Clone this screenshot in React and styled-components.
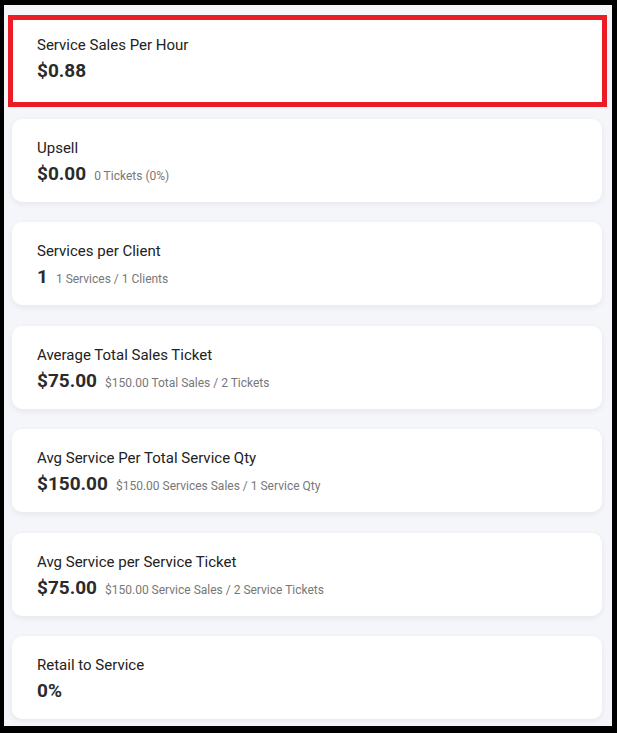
import styled, { createGlobalStyle } from "styled-components";

const GlobalStyle = createGlobalStyle`
  html, body {
    margin: 0;
    padding: 0;
    background: #000;
  }
  body {
    font-family: Roboto, "Liberation Sans", Arial, sans-serif;
  }
`;

const Frame = styled.div`
  box-sizing: border-box;
  width: 617px;
  height: 733px;
  border-style: solid;
  border-color: #000;
  border-width: 5px 5px 7px 4px;
  background: #f5f6fa;
  overflow: hidden;
`;

const List = styled.div`
  display: flex;
  flex-direction: column;
  gap: 20.4px;
  padding: 10px 10px 0 8px;
`;

const Highlight = styled.div`
  border: 5px solid #ec1c24;
  margin: 0 -5px -8.4px -4px;
  background: #fff;
`;

const Card = styled.div`
  box-sizing: border-box;
  height: ${(p) => (p.$flat ? "82px" : "83px")};
  background: #fff;
  border-radius: ${(p) => (p.$flat ? "0 0 10px 0" : "10px")};
  box-shadow: ${(p) => (p.$flat ? "none" : "0 2px 6px rgba(20, 30, 60, 0.07)")};
  padding: ${(p) => (p.$flat ? "16px 24px 0 24px" : "20px 25px 0 25px")};
`;

const Title = styled.div`
  font-size: 15px;
  font-weight: 400;
  color: #222;
  line-height: 18px;
`;

const ValueRow = styled.div`
  display: flex;
  align-items: baseline;
  gap: 8px;
  margin-top: 6px;
`;

const Value = styled.span`
  font-size: 19px;
  font-weight: 700;
  color: #2b2b2b;
  line-height: 22px;
`;

const Note = styled.span`
  font-size: 12px;
  color: #777;
`;

const metrics = [
  { title: "Upsell", value: "$0.00", note: "0 Tickets (0%)" },
  { title: "Services per Client", value: "1", note: "1 Services / 1 Clients" },
  {
    title: "Average Total Sales Ticket",
    value: "$75.00",
    note: "$150.00 Total Sales / 2 Tickets",
  },
  {
    title: "Avg Service Per Total Service Qty",
    value: "$150.00",
    note: "$150.00 Services Sales / 1 Service Qty",
  },
  {
    title: "Avg Service per Service Ticket",
    value: "$75.00",
    note: "$150.00 Service Sales / 2 Service Tickets",
  },
  { title: "Retail to Service", value: "0%" },
];

function Metric({ title, value, note, flat }) {
  return (
    <Card $flat={flat}>
      <Title>{title}</Title>
      <ValueRow>
        <Value>{value}</Value>
        {note && <Note>{note}</Note>}
      </ValueRow>
    </Card>
  );
}

export default function App() {
  return (
    <>
      <GlobalStyle />
      <Frame>
        <List>
          <Highlight>
            <Metric flat title="Service Sales Per Hour" value="$0.88" />
          </Highlight>
          {metrics.map((m) => (
            <Metric key={m.title} {...m} />
          ))}
        </List>
      </Frame>
    </>
  );
}
